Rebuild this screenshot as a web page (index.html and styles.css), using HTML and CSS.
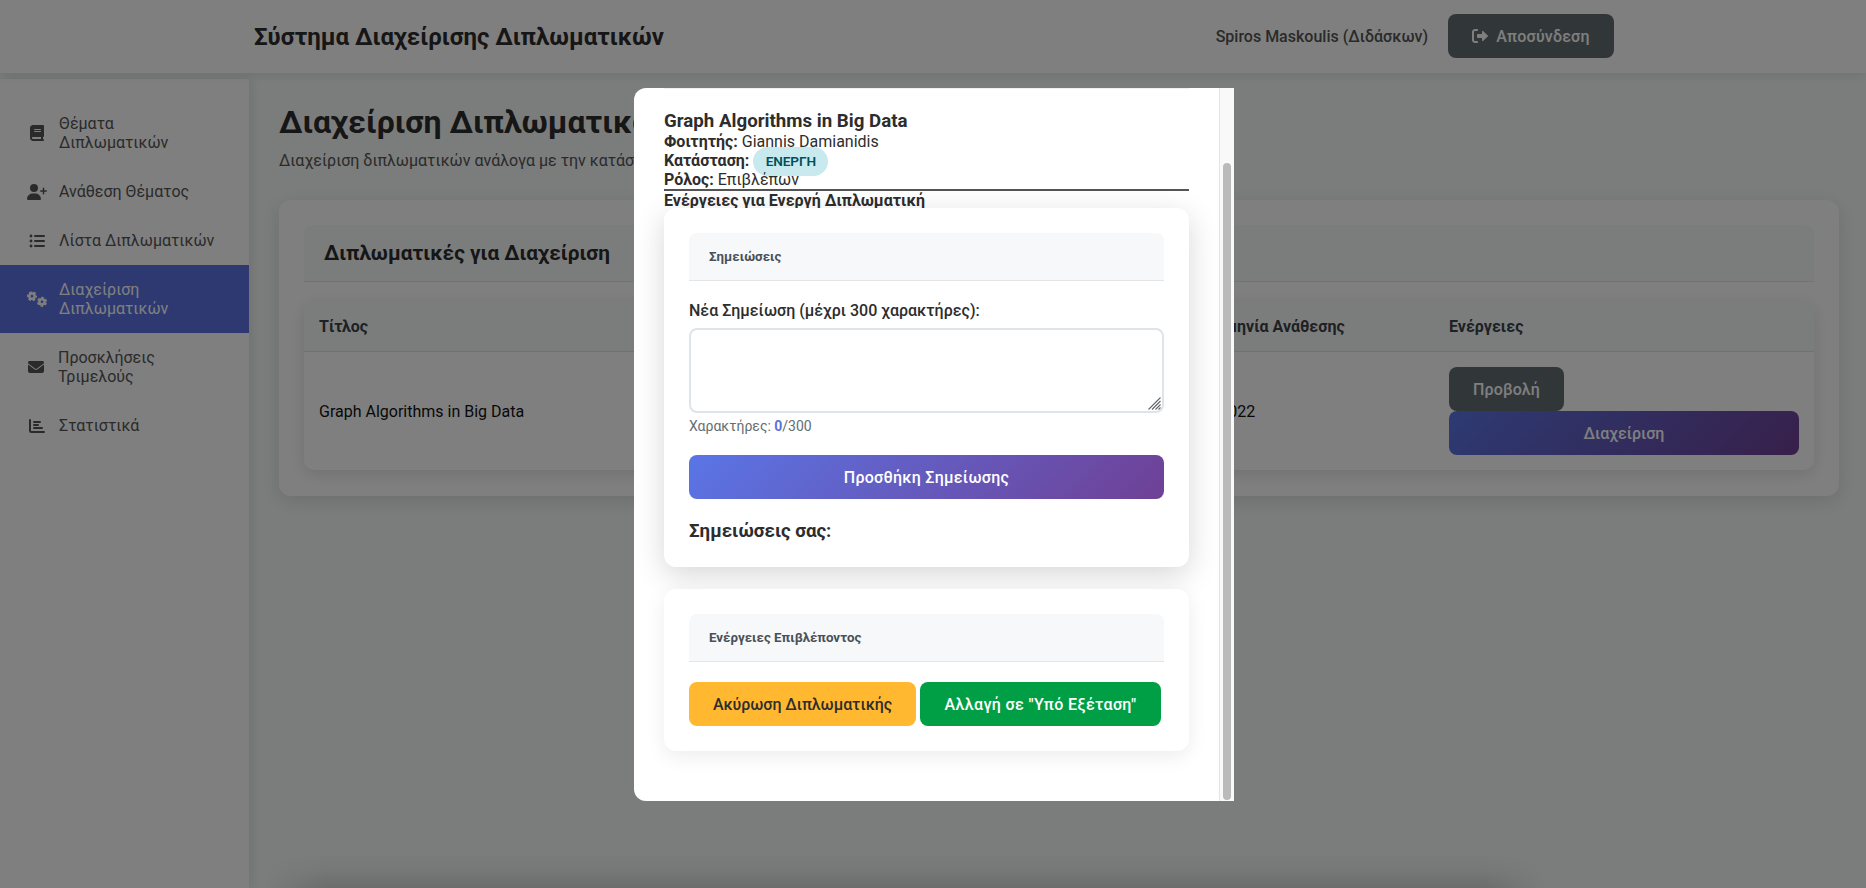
FILE: index.html
```html
<!DOCTYPE html>
<html lang="el">
<head>
<meta charset="utf-8">
<title>Διαχείριση Διπλωματικών</title>
<link rel="stylesheet" href="styles.css">
</head>
<body>
<header class="topbar">
  <div class="topbar-inner">
    <div class="brand">Σύστημα Διαχείρισης Διπλωματικών</div>
    <div class="user">
      <span class="user-name">Spiros Maskoulis (Διδάσκων)</span>
      <button class="btn btn-secondary btn-logout"><svg class="ico" viewBox="0 0 512 512"><path d="M160 96c17.700 0 32-14.300 32-32s-14.300-32-32-32H96C43 32 0 75 0 128v256c0 53 43 96 96 96h64c17.700 0 32-14.300 32-32s-14.300-32-32-32H96c-17.700 0-32-14.300-32-32V128c0-17.700 14.300-32 32-32h64zM504.500 273.400c4.800-4.500 7.500-10.800 7.500-17.400s-2.700-12.900-7.500-17.400l-144-136c-7-6.600-17.200-8.400-26-4.600S320 110.400 320 120v72h-128c-17.700 0-32 14.300-32 32v64c0 17.700 14.300 32 32 32h128v72c0 9.600 5.700 18.200 14.500 22s19 2 26-4.600l144-136z"/></svg>Αποσύνδεση</button>
    </div>
  </div>
</header>
<div class="layout">
  <nav class="sidebar">
    <a class="nav-item"><span class="nav-ico"><svg class="ico narrow" viewBox="0 0 448 512"><path fill-rule="evenodd" d="M96 0C43 0 0 43 0 96v320c0 53 43 96 96 96h320c17.700 0 32-14.300 32-32s-14.300-32-32-32v-64c17.700 0 32-14.300 32-32V32c0-17.700-14.300-32-32-32H96zm0 384h256v64H96c-17.700 0-32-14.300-32-32s14.300-32 32-32zm32-240c0-8.800 7.200-16 16-16h192c8.800 0 16 7.200 16 16s-7.200 16-16 16H144c-8.800 0-16-7.200-16-16zm16 48h192c8.800 0 16 7.200 16 16s-7.200 16-16 16H144c-8.800 0-16-7.200-16-16s7.200-16 16-16z"/></svg></span><span>Θέματα Διπλωματικών</span></a>
    <a class="nav-item"><span class="nav-ico"><svg class="ico wide" viewBox="0 0 640 512"><path d="M96 128a128 128 0 1 1 256 0 128 128 0 1 1-256 0zM0 482.300C0 383.800 79.800 304 178.300 304h91.400C368.200 304 448 383.800 448 482.300c0 16.400-13.300 29.700-29.700 29.700H29.700C13.300 512 0 498.700 0 482.300zM504 312v-64h-64c-13.300 0-24-10.700-24-24s10.700-24 24-24h64v-64c0-13.300 10.700-24 24-24s24 10.700 24 24v64h64c13.300 0 24 10.700 24 24s-10.700 24-24 24h-64v64c0 13.300-10.700 24-24 24s-24-10.700-24-24z"/></svg></span><span>Ανάθεση Θέματος</span></a>
    <a class="nav-item"><span class="nav-ico"><svg class="ico" viewBox="0 0 512 512"><circle cx="64" cy="96" r="46"/><circle cx="64" cy="256" r="46"/><circle cx="64" cy="416" r="46"/><rect x="160" y="64" width="352" height="64" rx="32"/><rect x="160" y="224" width="352" height="64" rx="32"/><rect x="160" y="384" width="352" height="64" rx="32"/></svg></span><span>Λίστα Διπλωματικών</span></a>
    <a class="nav-item active"><span class="nav-ico"><svg class="ico wide" viewBox="0 0 640 512"><g fill="none" stroke="currentColor"><circle cx="160" cy="166" r="84" stroke-width="80"/><circle cx="160" cy="166" r="138" stroke-width="48" stroke-dasharray="82 62.500" stroke-dashoffset="41"/><circle cx="480" cy="346" r="84" stroke-width="80"/><circle cx="480" cy="346" r="138" stroke-width="48" stroke-dasharray="82 62.500" stroke-dashoffset="113"/></g></svg></span><span>Διαχείριση Διπλωματικών</span></a>
    <a class="nav-item nav-mail"><span class="nav-ico"><svg class="ico" viewBox="0 0 512 512"><path d="M48 64C21.500 64 0 85.500 0 112c0 15.100 7.100 29.300 19.200 38.400l217.600 163.200c11.400 8.500 27 8.500 38.400 0l217.600-163.200c12.100-9.100 19.200-23.300 19.200-38.400 0-26.500-21.500-48-48-48H48zM0 176v208c0 35.300 28.700 64 64 64h384c35.300 0 64-28.700 64-64V176L294.400 339.200c-22.800 17.100-54 17.100-76.800 0L0 176z"/></svg></span><span>Προσκλήσεις Τριμελούς</span></a>
    <a class="nav-item"><span class="nav-ico"><svg class="ico" viewBox="0 0 512 512"><g fill="none" stroke="currentColor" stroke-width="64" stroke-linecap="round"><path d="M32 64v336c0 27 21 48 48 48h400M160 128h192M160 224h128M160 320h256"/></g></svg></span><span>Στατιστικά</span></a>
  </nav>
  <main class="main">
    <h1 class="page-title">Διαχείριση Διπλωματικών</h1>
    <p class="page-sub">Διαχείριση διπλωματικών ανάλογα με την κατάσταση</p>
    <section class="card">
      <div class="card-head"><h2 class="card-title">Διπλωματικές για Διαχείριση</h2></div>
      <table class="grid">
        <colgroup><col class="c-title"><col class="c-student"><col class="c-date"><col class="c-act"></colgroup>
        <thead><tr><th>Τίτλος</th><th>Φοιτητής</th><th>Ημερομηνία Ανάθεσης</th><th>Ενέργειες</th></tr></thead>
        <tbody><tr><td>Graph Algorithms in Big Data</td><td>Giannis</td><td>5/10/2022</td><td class="actions"><button class="btn btn-secondary btn-view">Προβολή</button><button class="btn btn-primary">Διαχείριση</button></td></tr></tbody>
      </table>
    </section>
  </main>
</div>
<div class="footer-shade"></div>
<div class="overlay">
  <div class="modal">
    <div class="modal-body">
      <h3 class="thesis">Graph Algorithms in Big Data</h3>
      <p class="row"><strong>Φοιτητής:</strong> Giannis Damianidis</p>
      <p class="row"><strong>Κατάσταση:</strong> <span class="badge">ΕΝΕΡΓΗ</span></p>
      <p class="row"><strong>Ρόλος:</strong> Επιβλέπων</p>
      <hr class="rule">
      <h4 class="sect">Ενέργειες για Ενεργή Διπλωματική</h4>
      <section class="panel raised">
        <div class="panel-head">Σημειώσεις</div>
        <label class="label">Νέα Σημείωση (μέχρι 300 χαρακτήρες):</label>
        <div class="note-wrap"><textarea class="note"></textarea><svg class="grip" viewBox="0 0 13 13"><path d="M.5 12.500 12.500.5M4 12.500 12.500 4M7.500 12.500l5-5M10.500 12.500l2-2"/></svg></div>
        <div class="counter">Χαρακτήρες: <span class="count">0</span>/300</div>
        <button class="btn btn-primary btn-add">Προσθήκη Σημείωσης</button>
        <h3 class="yours">Σημειώσεις σας:</h3>
      </section>
      <section class="panel">
        <div class="panel-head">Ενέργειες Επιβλέποντος</div>
        <div class="btn-row"><button class="btn btn-warning">Ακύρωση Διπλωματικής</button><button class="btn btn-success">Αλλαγή σε "Υπό Εξέταση"</button></div>
      </section>
    </div>
    <div class="scroll"><div class="thumb"></div></div>
  </div>
</div>
</body>
</html>
```
FILE: styles.css
```css
* { box-sizing: border-box; margin: 0; padding: 0; }
body { width: 1866px; height: 888px; overflow: hidden; background: #f7faf9; color: #2d2d2d; font: 16px/19px Roboto, sans-serif; position: relative; }
.ico { width: 16px; height: 16px; fill: currentColor; display: block; flex: none; }
.ico.narrow { width: 14px; }
.ico.wide { width: 20px; }

.topbar { position: relative; height: 73px; background: #fff; box-shadow: 0 2px 10px rgba(0,0,0,.1); }
.topbar-inner { width: 1400px; height: 73px; margin: 0 auto; padding: 0 19px 1px 21px; display: flex; align-items: center; justify-content: space-between; }
.brand { padding-top: 1px; font-size: 24px; line-height: 28px; font-weight: 700; }
.user { display: flex; align-items: center; gap: 20px; }
.user-name { font-weight: 500; color: #555; }

.btn { display: inline-flex; align-items: center; justify-content: center; height: 44px; padding: 0 24px; border: 0; border-radius: 8px; font: 500 16px/19px Roboto, sans-serif; color: #fff; white-space: nowrap; }
.btn-secondary { background: #636e72; }
.btn-primary { background: linear-gradient(135deg, #5a75e6, #6f4095); }
.btn-warning { width: 227px; background: #ffb830; color: #2d2d2d; letter-spacing: -.05px; }
.btn-success { width: 241px; background: #009f45; letter-spacing: .35px; }
.btn-logout { width: 166px; gap: 8px; letter-spacing: .2px; }
.btn-view { width: 115px; letter-spacing: .15px; }

.layout { display: flex; height: 815px; padding-top: 6px; }
.sidebar { width: 249px; flex: none; padding-top: 20px; background: #fff; box-shadow: 2px 0 10px rgba(0,0,0,.1); }
.nav-item { display: flex; align-items: center; gap: 11px; padding: 15px 25px 15px 26px; color: #555; }
.nav-mail { padding-left: 25px; }
.nav-ico { width: 22px; display: flex; justify-content: center; flex: none; }
.nav-item.active { background: #5a73e0; color: #fff; }
.main { flex: 1; padding: 24px 27px 0 30px; }
.page-title { font-size: 32px; line-height: 38px; font-weight: 700; }
.page-sub { margin-top: 10px; color: #555; }
.card { margin-top: 30px; height: 296px; padding: 25px; background: #fff; border-radius: 12px; box-shadow: 0 5px 20px rgba(0,0,0,.12); }
.card-head { height: 57px; padding: 16px 20px; background: #f7faf9; border-bottom: 1px solid #e2e8e8; border-radius: 8px 8px 0 0; }
.card-title { font-size: 20.800px; line-height: 24px; font-weight: 700; }
.grid { width: 100%; height: 169px; margin-top: 19px; table-layout: fixed; border-collapse: separate; border-spacing: 0; border-radius: 10px; overflow: hidden; background: #fff; box-shadow: 0 4px 16px rgba(0,0,0,.12); }
.c-title { width: 440px; }
.c-student { width: 420px; }
.c-date { width: 270px; }
.grid th { height: 51px; padding: 0 15px; text-align: left; font-weight: 700; color: #3c4248; background: #f7faf9; border-bottom: 1px solid #dee2e6; }
.grid td { padding: 0 15px; color: #111; vertical-align: middle; }
.grid .actions { font-size: 0; }
.grid .btn-primary { display: flex; width: 100%; }

/* Soft shade along the lower edge, where the footer begins */
.footer-shade { position: absolute; left: 262px; bottom: 0; width: 1286px; height: 36px; background: linear-gradient(to bottom, rgba(0,0,0,0), rgba(0,0,0,.04) 50%, rgba(0,0,0,.13)); mask-image: linear-gradient(to right, transparent, #000 64px, #000 1222px, transparent); }
.overlay { position: absolute; inset: 0; background: rgba(0,0,0,.5); display: flex; justify-content: center; align-items: flex-start; padding: 88px 0 0 2px; }
.modal { width: 600px; height: 713px; display: flex; background: #fff; border-radius: 12px 0 0 12px; overflow: hidden; }
.modal-body { flex: 1; height: 713px; padding: 0 30px; }
.thesis { border-top: 1px solid #eef0f2; padding-top: 21px; font-size: 18.720px; line-height: 22px; font-weight: 700; }
.row { height: 19px; white-space: nowrap; }
.row strong { font-weight: 700; }
.badge { display: inline-block; width: 75px; height: 29px; margin: -5px 0; text-align: center; border-radius: 15px; background: #c8eaee; color: #00505a; font-size: 13.600px; line-height: 29px; font-weight: 600; letter-spacing: -.1px; vertical-align: middle; }
.rule { height: 2px; border: 0; background: #555; }
.sect { height: 17px; font-size: 16px; font-weight: 700; }
.panel { position: relative; height: 162px; padding: 25px; background: #fff; border-radius: 12px; box-shadow: 0 5px 20px rgba(0,0,0,.08); }
.panel.raised { height: 359px; margin-bottom: 22px; box-shadow: 0 8px 30px rgba(0,0,0,.16); }
.panel-head { height: 48px; padding: 15px 20px; background: #f7f8fa; border-bottom: 1px solid #e3e6e9; border-radius: 8px 8px 0 0; color: #495057; font-size: 13.300px; line-height: 17px; font-weight: 700; }
.label { display: block; margin: 20px 0 8px; font-weight: 500; }
.note-wrap { position: relative; height: 85px; }
.note { display: block; width: 475px; height: 85px; border: 2px solid #dfe4e8; border-radius: 8px; resize: none; background: #fff; }
.grip { position: absolute; right: 3px; bottom: 3px; width: 13px; height: 13px; fill: none; stroke: #666; stroke-width: 1.100; }
.counter { margin-top: 5px; font-size: 14px; line-height: 17px; color: #636e72; }
.count { color: #5a73e0; font-weight: 700; }
.btn-add { display: flex; width: 475px; margin-top: 20px; letter-spacing: .27px; }
.yours { margin-top: 21px; font-size: 18.720px; line-height: 22px; font-weight: 700; }
.btn-row { display: flex; gap: 4px; margin-top: 20px; }
.scroll { width: 15px; padding: 75px 0 1px 3px; background: #f9f9f9; border-left: 1px solid #e4e4e4; }
.thumb { width: 8px; height: 637px; border-radius: 4px; background: #bababa; }
```
